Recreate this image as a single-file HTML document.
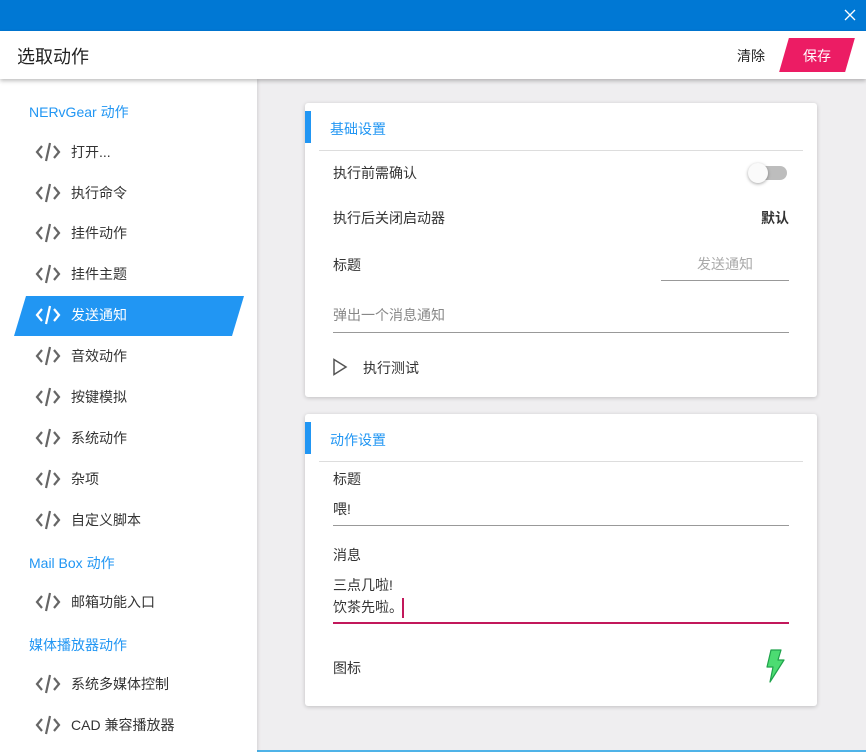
<!DOCTYPE html><html><head><meta charset="utf-8"><style>
*{margin:0;padding:0;box-sizing:border-box}
body{width:866px;height:752px;overflow:hidden;background:#efeef0;font-family:"Liberation Sans","Noto Sans CJK SC",sans-serif;position:relative;font-size:14px;color:#333}
.abs{position:absolute}
.tb{left:0;top:0;width:866px;height:31px;background:#0078d4}
.hd{left:0;top:31px;width:866px;height:48px;background:#fff;box-shadow:0 2px 4px rgba(0,0,0,.25);z-index:3}
.sb{left:0;top:79px;width:257px;height:673px;background:#fff;box-shadow:1px 0 3px rgba(0,0,0,.12);z-index:2}
.item{position:absolute;left:0;width:257px;height:30px;display:flex;align-items:center}
.item svg{position:absolute;left:35px}
.item span{position:absolute;left:71px;font-size:14px;color:#333}
.h{position:absolute;left:29px;color:#2196f3;font-size:14px}
.card{position:absolute;left:305px;width:512px;background:#fff;border-radius:3px;box-shadow:0 1px 4px rgba(0,0,0,.2)}
.bar{position:absolute;left:0;width:6px;height:32px;background:#2196f3}
.ct{position:absolute;left:25px;color:#2196f3;font-size:14px}
.t{position:absolute;font-size:14px;color:#333}
.line{position:absolute;height:1px;background:#999}
</style></head><body>
<div class="abs tb"></div>
<svg class="abs" style="left:844px;top:9px" width="12" height="12"><path d="M1 1L11 11M11 1L1 11" stroke="#fff" stroke-width="1.3"/></svg>
<div class="abs hd">
<div class="abs" style="left:17px;top:12px;font-size:18px;color:#222">选取动作</div>
<div class="abs" style="left:737px;top:15px;font-size:14px;color:#222">清除</div>
<div class="abs" style="left:784px;top:7px;width:66px;height:34px;background:#ec1c64;transform:skewX(-16deg)"></div>
<div class="abs" style="left:803px;top:15px;font-size:14px;color:#fff">保存</div>
</div>
<div class="abs sb">
<div class="h" style="top:23px">NERvGear 动作</div>
<div class="abs" style="left:14px;top:217px;width:230px;height:40px;background:#2196f3;clip-path:polygon(12px 0,230px 0,218px 40px,0 40px)"></div>
<div id="items"></div>
<div class="h" style="top:474px">Mail Box 动作</div>
<div class="h" style="top:556px">媒体播放器动作</div>
</div>
<script>
var it=[["打开...",153],["执行命令",194],["挂件动作",234],["挂件主题",275],["发送通知",316],["音效动作",357],["按键模拟",398],["系统动作",439],["杂项",480],["自定义脚本",521],["邮箱功能入口",603],["系统多媒体控制",685],["CAD 兼容播放器",726]];
var h="";it.forEach(function(a){var sel=a[0]=="发送通知";var c=sel?"#fff":"#666";h+='<div class="item" style="top:'+(a[1]-79-16)+'px"><svg width="26" height="22" viewBox="0 0 26 22"><path d="M7 5L2 11L7 17M19 5L24 11L19 17M15 2L11 20" fill="none" stroke="'+c+'" stroke-width="2.2"/></svg><span style="color:'+(sel?"#fff":"#333")+'">'+a[0]+'</span></div>'});document.getElementById("items").innerHTML=h;
</script>
<div class="card" style="top:103px;height:294px">
<div class="bar" style="top:8px"></div>
<div class="ct" style="top:16px">基础设置</div>
<div class="abs" style="left:14px;top:47px;width:484px;height:1px;background:#ddd"></div>
<div class="t" style="left:28px;top:60px">执行前需确认</div>
<div class="abs" style="left:446px;top:63px;width:36px;height:14px;border-radius:7px;background:#bdbdbd"></div>
<div class="abs" style="left:443px;top:60px;width:20px;height:20px;border-radius:50%;background:#fafafa;box-shadow:0 1px 3px rgba(0,0,0,.35)"></div>
<div class="t" style="left:28px;top:105px">执行后关闭启动器</div>
<div class="t" style="left:456px;top:105px;font-weight:bold">默认</div>
<div class="t" style="left:28px;top:152px">标题</div>
<div class="t" style="left:392px;top:151px;color:#aaa">发送通知</div>
<div class="line" style="left:356px;top:177px;width:128px"></div>
<div class="t" style="left:28px;top:202px;color:#888">弹出一个消息通知</div>
<div class="line" style="left:28px;top:229px;width:456px"></div>
<svg class="abs" style="left:27px;top:255px" width="16" height="18"><path d="M2 1.5L14 9L2 16.5Z" fill="none" stroke="#555" stroke-width="1.5"/></svg>
<div class="t" style="left:58px;top:255px">执行测试</div>
</div>
<div class="card" style="top:414px;height:292px">
<div class="bar" style="top:8px"></div>
<div class="ct" style="top:16px">动作设置</div>
<div class="abs" style="left:14px;top:47px;width:484px;height:1px;background:#ddd"></div>
<div class="t" style="left:28px;top:55px">标题</div>
<div class="t" style="left:28px;top:85px">喂!</div>
<div class="line" style="left:28px;top:111px;width:456px"></div>
<div class="t" style="left:28px;top:131px">消息</div>
<div class="t" style="left:28px;top:161px">三点几啦!</div>
<div class="t" style="left:28px;top:183px">饮茶先啦。</div>
<div class="abs" style="left:97px;top:184px;width:2px;height:20px;background:#c2185b"></div>
<div class="abs" style="left:28px;top:208px;width:456px;height:2px;background:#c2185b"></div>
<div class="t" style="left:28px;top:244px">图标</div>
<svg class="abs" style="left:458px;top:235px" width="24" height="34" viewBox="0 0 24 34"><path d="M8 1L18 1L15 11L21 11L7 33L10 18L4 18Z" fill="#4cdc72" stroke="#1fa24b" stroke-width="1.2" stroke-linejoin="round"/></svg>
</div>
<div class="abs" style="left:0;top:750px;width:866px;height:2px;background:#4fb3e8"></div>
</body></html>
